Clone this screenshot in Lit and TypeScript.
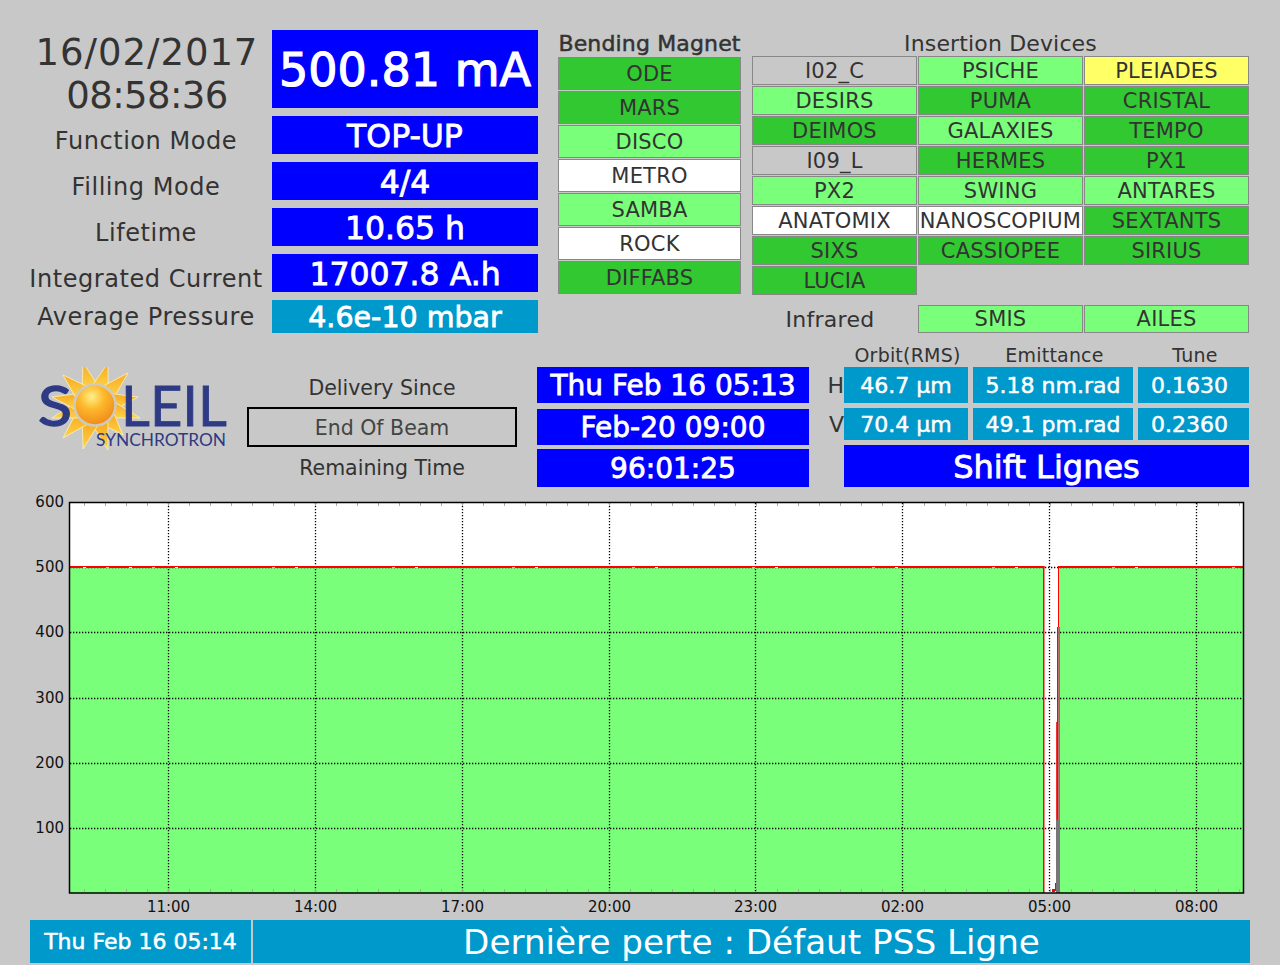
import { LitElement, html, css, svg } from 'lit';
import { customElement } from 'lit/decorators.js';

type Cell = [string, 'on' | 'ok' | 'off' | 'idle' | 'warn'];

const BENDING: Cell[] = [
  ['ODE', 'on'],
  ['MARS', 'on'],
  ['DISCO', 'ok'],
  ['METRO', 'off'],
  ['SAMBA', 'ok'],
  ['ROCK', 'off'],
  ['DIFFABS', 'on'],
];

const INSERTION: Cell[] = [
  ['I02_C', 'idle'], ['PSICHE', 'ok'], ['PLEIADES', 'warn'],
  ['DESIRS', 'ok'], ['PUMA', 'on'], ['CRISTAL', 'on'],
  ['DEIMOS', 'on'], ['GALAXIES', 'ok'], ['TEMPO', 'on'],
  ['I09_L', 'idle'], ['HERMES', 'on'], ['PX1', 'on'],
  ['PX2', 'ok'], ['SWING', 'ok'], ['ANTARES', 'ok'],
  ['ANATOMIX', 'off'], ['NANOSCOPIUM', 'off'], ['SEXTANTS', 'on'],
  ['SIXS', 'on'], ['CASSIOPEE', 'on'], ['SIRIUS', 'on'],
  ['LUCIA', 'on'],
];

const STATS = [
  ['Function Mode', 'TOP-UP', 'blue'],
  ['Filling Mode', '4/4', 'blue'],
  ['Lifetime', '10.65 h', 'blue'],
  ['Integrated Current', '17007.8 A.h', 'blue'],
  ['Average Pressure', '4.6e-10 mbar', 'cyan'],
];

const X_TICKS = [
  [168, '11:00'], [315, '14:00'], [462, '17:00'], [609, '20:00'],
  [755, '23:00'], [902, '02:00'], [1049, '05:00'], [1196, '08:00'],
] as [number, string][];

const Y_TICKS = [
  [502, '600'], [567, '500'], [632, '400'], [698, '300'], [763, '200'], [828, '100'],
] as [number, string][];

// tips of the sun rays, in page pixels
const RAYS = [
  [83, 363], [108, 363], [128, 373], [138, 397], [140, 418], [123, 435],
  [108, 450], [83, 449], [63, 438], [52, 418], [52, 397], [63, 375],
];

const SUN_X = 95;
const SUN_Y = 405;

function rayPoints([x, y]: number[]) {
  const a = Math.atan2(y - SUN_Y, x - SUN_X);
  const p = (d: number) =>
    `${SUN_X + 21 * Math.cos(a + d)},${SUN_Y + 21 * Math.sin(a + d)}`;
  return `${p(-0.38)} ${x},${y} ${p(0.38)}`;
}

@customElement('app-root')
export class AppRoot extends LitElement {
  static styles = css`
    :host {
      display: block;
      width: 1280px;
      height: 965px;
      overflow: hidden;
      background: #c8c8c8;
      font-family: 'DejaVu Sans', sans-serif;
      color: #333;
    }

    .top {
      display: flex;
      height: 340px;
      box-sizing: border-box;
      padding: 30px 0 0 30px;
    }

    .summary {
      display: grid;
      grid-template-columns: 232px 266px;
      grid-template-rows: 78px repeat(4, 38px) 33px;
      column-gap: 10px;
      row-gap: 8px;
      width: 508px;
    }

    .clock {
      font-size: 37px;
      line-height: 43px;
      text-align: center;
      white-space: nowrap;
      letter-spacing: 0.95px;
      padding-top: 1px;
      margin-left: 2px;
    }

    .clock-time {
      letter-spacing: -0.6px;
    }

    .label {
      display: flex;
      align-items: center;
      justify-content: center;
      font-size: 24px;
      letter-spacing: 0.55px;
      white-space: nowrap;
      padding-top: 12px;
    }

    .label:nth-last-child(2) {
      padding-top: 0;
    }

    .value {
      display: flex;
      align-items: center;
      justify-content: center;
      color: #fff;
      -webkit-text-stroke: 0.8px #fff;
      padding-top: 1px;
      white-space: nowrap;
    }

    .blue {
      background: #0000ff;
    }

    .cyan {
      background: #0099cc;
    }

    .current {
      font-size: 46px;
      -webkit-text-stroke-width: 1.2px;
    }

    .stat {
      font-size: 31.5px;
    }

    .stat.cyan {
      font-size: 28.5px;
    }

    .bending {
      width: 183px;
      margin-left: 20px;
    }

    .title {
      font-size: 22px;
      letter-spacing: 0.15px;
      -webkit-text-stroke: 0.5px #333;
      height: 27px;
      line-height: 27px;
      text-align: center;
      white-space: nowrap;
    }

    .bending-cells {
      display: grid;
      grid-template-rows: repeat(7, 33px);
      row-gap: 1px;
    }

    .insertion {
      width: 497px;
      margin-left: 11px;
    }

    .insertion .title {
      -webkit-text-stroke: 0;
      height: 26px;
    }

    .insertion-cells {
      display: grid;
      grid-template-columns: repeat(3, 165px);
      grid-auto-rows: 29px;
      gap: 1px;
    }

    .infrared {
      display: grid;
      grid-template-columns: 165px 165px 165px;
      grid-template-rows: 28px;
      column-gap: 1px;
      margin-top: 10px;
    }

    .infrared-label {
      display: flex;
      align-items: center;
      justify-content: center;
      font-size: 22px;
      letter-spacing: 0.3px;
      padding-right: 9px;
    }

    .cell {
      display: flex;
      align-items: center;
      justify-content: center;
      box-sizing: border-box;
      border: 1px solid #888;
      font-size: 21px;
      letter-spacing: 0.2px;
      white-space: nowrap;
      overflow: hidden;
    }

    .on {
      background: #32c832;
    }

    .ok {
      background: #7aff7a;
    }

    .off {
      background: #fff;
    }

    .warn {
      background: #ffff66;
    }

    .middle {
      display: flex;
      height: 150px;
      box-sizing: border-box;
      padding-top: 27px;
    }

    .logo {
      width: 247px;
      height: 123px;
      flex: none;
    }

    .beam {
      display: grid;
      grid-template-rows: 40px 40px 40px;
      width: 270px;
      flex: none;
    }

    .beam-text {
      display: flex;
      align-items: center;
      justify-content: center;
      padding-top: 1px;
      font-size: 20.5px;
    }

    .beam-box {
      display: flex;
      align-items: center;
      justify-content: center;
      box-sizing: border-box;
      border: 2px solid #000;
      padding-top: 1px;
      font-size: 20.5px;
      color: #444;
    }

    .times {
      display: grid;
      grid-template-rows: 36px 36px 38px;
      row-gap: 5px;
      width: 272px;
      margin-left: 20px;
      flex: none;
      font-size: 28px;
    }

    .times .mid {
      margin: 1px 0 -1px;
    }

    .machine {
      display: grid;
      grid-template-columns: 15px 124px 160px 111px;
      grid-template-rows: 17px 36px 32px 42px;
      column-gap: 5px;
      row-gap: 5px;
      margin-left: 15px;
      margin-top: -22px;
      width: 420px;
      flex: none;
    }

    .machine-head {
      display: flex;
      align-items: center;
      justify-content: center;
      box-sizing: border-box;
      padding: 3px 0 0 3px;
      font-size: 19px;
      letter-spacing: 0.2px;
      white-space: nowrap;
    }

    .plane {
      display: flex;
      align-items: center;
      justify-content: flex-end;
      font-size: 22px;
      margin-right: -5px;
    }

    .reading {
      font-size: 22px;
      -webkit-text-stroke-width: 0.5px;
    }

    .tune {
      padding-right: 8px;
    }

    .shift {
      grid-column: 2 / 5;
      font-size: 32px;
    }

    .chart {
      display: block;
      width: 1280px;
      height: 430px;
    }

    .axis {
      font-family: 'DejaVu Sans', sans-serif;
      font-size: 15px;
      fill: #111;
      -webkit-text-stroke: 0.5px #111;
    }

    .footer {
      display: flex;
      gap: 2px;
      height: 43px;
      margin-left: 30px;
      width: 1220px;
    }

    .footer .value {
      padding-top: 0;
    }

    .stamp {
      width: 221px;
      flex: none;
      font-size: 22px;
      -webkit-text-stroke-width: 0.5px;
    }

    .message {
      flex: 1;
      font-size: 34.2px;
      -webkit-text-stroke-width: 0;
    }
  `;

  render() {
    return html`
      <div class="top">
        ${this.renderSummary()}
        <div class="bending">
          <div class="title">Bending Magnet</div>
          <div class="bending-cells">${BENDING.map((c) => this.renderCell(c))}</div>
        </div>
        <div class="insertion">
          <div class="title">Insertion Devices</div>
          <div class="insertion-cells">${INSERTION.map((c) => this.renderCell(c))}</div>
          <div class="infrared">
            <div class="infrared-label">Infrared</div>
            <div class="cell ok">SMIS</div>
            <div class="cell ok">AILES</div>
          </div>
        </div>
      </div>
      <div class="middle">
        ${this.renderLogo()}
        <div class="beam">
          <div class="beam-text">Delivery Since</div>
          <div class="beam-box">End Of Beam</div>
          <div class="beam-text">Remaining Time</div>
        </div>
        <div class="times">
          <div class="value blue">Thu Feb 16 05:13</div>
          <div class="value blue mid">Feb-20 09:00</div>
          <div class="value blue">96:01:25</div>
        </div>
        ${this.renderMachine()}
      </div>
      ${this.renderChart()}
      <div class="footer">
        <div class="value cyan stamp">Thu Feb 16 05:14</div>
        <div class="value cyan message">Dernière perte : Défaut PSS Ligne</div>
      </div>
    `;
  }

  private renderSummary() {
    return html`<div class="summary">
      <div class="clock">16/02/2017<br /><span class="clock-time">08:58:36</span></div>
      <div class="value blue current">500.81 mA</div>
      ${STATS.map(
        ([label, value, tone]) => html`
          <div class="label">${label}</div>
          <div class="value stat ${tone}">${value}</div>
        `
      )}
    </div>`;
  }

  private renderCell([name, state]: Cell) {
    return html`<div class="cell ${state}">${name}</div>`;
  }

  private renderMachine() {
    return html`<div class="machine">
      <div></div>
      <div class="machine-head">Orbit(RMS)</div>
      <div class="machine-head">Emittance</div>
      <div class="machine-head">Tune</div>
      <div class="plane">H</div>
      <div class="value cyan reading">46.7 µm</div>
      <div class="value cyan reading">5.18 nm.rad</div>
      <div class="value cyan reading tune">0.1630</div>
      <div class="plane">V</div>
      <div class="value cyan reading">70.4 µm</div>
      <div class="value cyan reading">49.1 pm.rad</div>
      <div class="value cyan reading tune">0.2360</div>
      <div></div>
      <div class="value blue shift">Shift Lignes</div>
    </div>`;
  }

  private renderLogo() {
    return html`<svg class="logo" viewBox="0 367 247 123">
      <defs>
        <radialGradient id="ball" cx="0.42" cy="0.3" r="0.75">
          <stop offset="0" stop-color="#fff08a" />
          <stop offset="0.4" stop-color="#fdb92c" />
          <stop offset="1" stop-color="#ee8418" />
        </radialGradient>
        <linearGradient id="ray" x1="0" y1="0" x2="0" y2="1">
          <stop offset="0" stop-color="#f8a91f" />
          <stop offset="1" stop-color="#fdd34a" />
        </linearGradient>
      </defs>
      ${RAYS.map(
        (r) => svg`<polygon points=${rayPoints(r)} fill="url(#ray)" stroke="#fff2b8" stroke-width="0.8" />`
      )}
      <text x="38" y="426" font-family="Lato, sans-serif" font-size="56" fill="#2e3a84" stroke="#2e3a84" stroke-width="1.4" textLength="34" lengthAdjust="spacingAndGlyphs">S</text>
      <circle cx=${SUN_X} cy=${SUN_Y} r="20.5" fill="url(#ball)" stroke="#cfcabc" stroke-width="2.5" />
      <text x="121" y="426" font-family="Lato, sans-serif" font-size="56" fill="#2e3a84" stroke="#2e3a84" stroke-width="0.8" textLength="106" lengthAdjust="spacingAndGlyphs">LEIL</text>
      <text x="96" y="446" font-family="Lato, sans-serif" font-size="18" fill="#2e3a84" textLength="130" lengthAdjust="spacingAndGlyphs">SYNCHROTRON</text>
    </svg>`;
  }

  private renderChart() {
    const minor: number[] = [];
    for (let x = 84; x < 1243; x += 21) minor.push(x);
    const specks: number[] = [];
    for (let x = 83; x < 1240; x += x % 5 === 0 ? 97 : 23) specks.push(x);
    return html`<svg class="chart" viewBox="0 490 1280 430">
      <rect x="70" y="503" width="1173" height="390" fill="#fff" />
      <rect x="70" y="568" width="973" height="325" fill="#7aff7a" />
      <rect x="1059" y="568" width="184" height="59" fill="#7aff7a" />
      <rect x="1060" y="627" width="183" height="266" fill="#7aff7a" />

      ${Y_TICKS.slice(1).map(
        ([y]) => svg`<line x1="70" x2="1243" y1=${y + 0.5} y2=${y + 0.5} stroke="#000" stroke-width="1.3" stroke-dasharray="1.3 1.7" />`
      )}
      ${X_TICKS.map(
        ([x]) => svg`<line x1=${x + 0.5} x2=${x + 0.5} y1="503" y2="893" stroke="#000" stroke-width="1.3" stroke-dasharray="1.3 1.7" />`
      )}

      <rect x="70" y="566" width="974.5" height="2" fill="#f00" />
      <rect x="1058" y="566" width="185" height="2" fill="#f00" />
      ${specks.map(
        (x) => svg`<rect x=${x} y="567" width="3" height="1" fill=${x % 2 ? '#fff' : '#5fd'} />`
      )}
      <rect x="1043" y="566" width="1.5" height="327" fill="#f00" />
      <rect x="1058" y="566" width="1" height="61" fill="#f00" />
      <rect x="1058.3" y="627" width="1.7" height="266" fill="#777" />
      <rect x="1057" y="627" width="1.3" height="193" fill="#f00" />
      <rect x="1056" y="722" width="1" height="98" fill="#e33" />
      <rect x="1056" y="820" width="4" height="73" fill="#777" />
      <rect x="1055" y="883" width="1" height="8" fill="#f00" />
      <rect x="1052" y="889" width="3" height="3" fill="#f00" />

      ${minor.map(
        (x) => svg`
          <line x1=${x + 0.5} x2=${x + 0.5} y1="503" y2="506" stroke="#aaa" />
          <line x1=${x + 0.5} x2=${x + 0.5} y1="889" y2="892" stroke="#aaa" />
        `
      )}
      <rect x="69.5" y="502.5" width="1174" height="390.5" fill="none" stroke="#000" stroke-width="1.5" />
      ${Y_TICKS.map(
        ([y, t]) => svg`<text class="axis" x="64" y=${y + 5} text-anchor="end">${t}</text>`
      )}
      ${X_TICKS.map(
        ([x, t]) => svg`<text class="axis" x=${x + 0.5} y="912" text-anchor="middle">${t}</text>`
      )}
    </svg>`;
  }
}
